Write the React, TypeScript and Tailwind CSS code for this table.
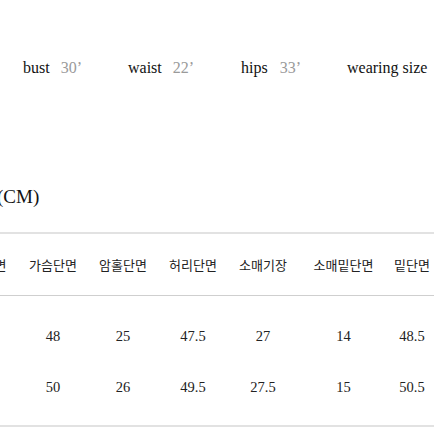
import React from "react";

const serif = { fontFamily: '"Liberation Serif", "Times New Roman", serif' };
const kr = { fontFamily: '"Noto Sans CJK KR", "Noto Sans", sans-serif' };

const cols = ["w-[71px]", "w-[70px]", "w-[70px]", "w-[70px]", "w-[70px]", "w-[91px]", "w-[46px]"];
const headers = ["어깨단면", "가슴단면", "암홀단면", "허리단면", "소매기장", "소매밑단면", "밑단면"];
const rows = [
  ["", "48", "25", "47.5", "27", "14", "48.5"],
  ["", "50", "26", "49.5", "27.5", "15", "50.5"],
];

export default function App() {
  return (
    <div className="w-[434px] h-[434px] overflow-hidden bg-white">
      <div className="pt-[59px] pl-[23px] flex text-[16px] leading-[18px] text-[#111]" style={serif}>
        <div className="w-[105px] flex">
          <span>bust</span>
          <span className="ml-[11px] text-[#9a9a9a]">30’</span>
        </div>
        <div className="w-[113px] flex">
          <span>waist</span>
          <span className="ml-[11px] text-[#9a9a9a]">22’</span>
        </div>
        <div className="w-[106px] flex">
          <span>hips</span>
          <span className="ml-[12px] text-[#9a9a9a]">33’</span>
        </div>
        <div className="flex">
          <span>wearing size</span>
        </div>
      </div>

      <div className="mt-[110px] -ml-[3px] text-[19px] leading-[20px] text-[#111]" style={serif}>
        (CM)
      </div>

      <div className="mt-[25px] border-t-2 border-[#e2e2e2]">
        <div className="h-[62px] flex items-center -ml-[53px] border-b border-[#cfcfcf] text-[13px] leading-[16px] text-[#222]" style={kr}>
          {headers.map((h, i) => (
            <div key={i} className={`${cols[i]} shrink-0 text-center whitespace-nowrap`}>
              {h}
            </div>
          ))}
        </div>
        <div className="pt-[14px] pb-[12px] border-b-2 border-[#e2e2e2]">
          {rows.map((r, ri) => (
            <div
              key={ri}
              className={`${ri === 0 ? "h-[51px]" : "h-[52px]"} flex items-center -ml-[53px] text-[14.5px] leading-[16px] text-[#222]`}
              style={serif}
            >
              {r.map((c, i) => (
                <div key={i} className={`${cols[i]} shrink-0 text-center whitespace-nowrap`}>
                  {c}
                </div>
              ))}
            </div>
          ))}
        </div>
      </div>
    </div>
  );
}
